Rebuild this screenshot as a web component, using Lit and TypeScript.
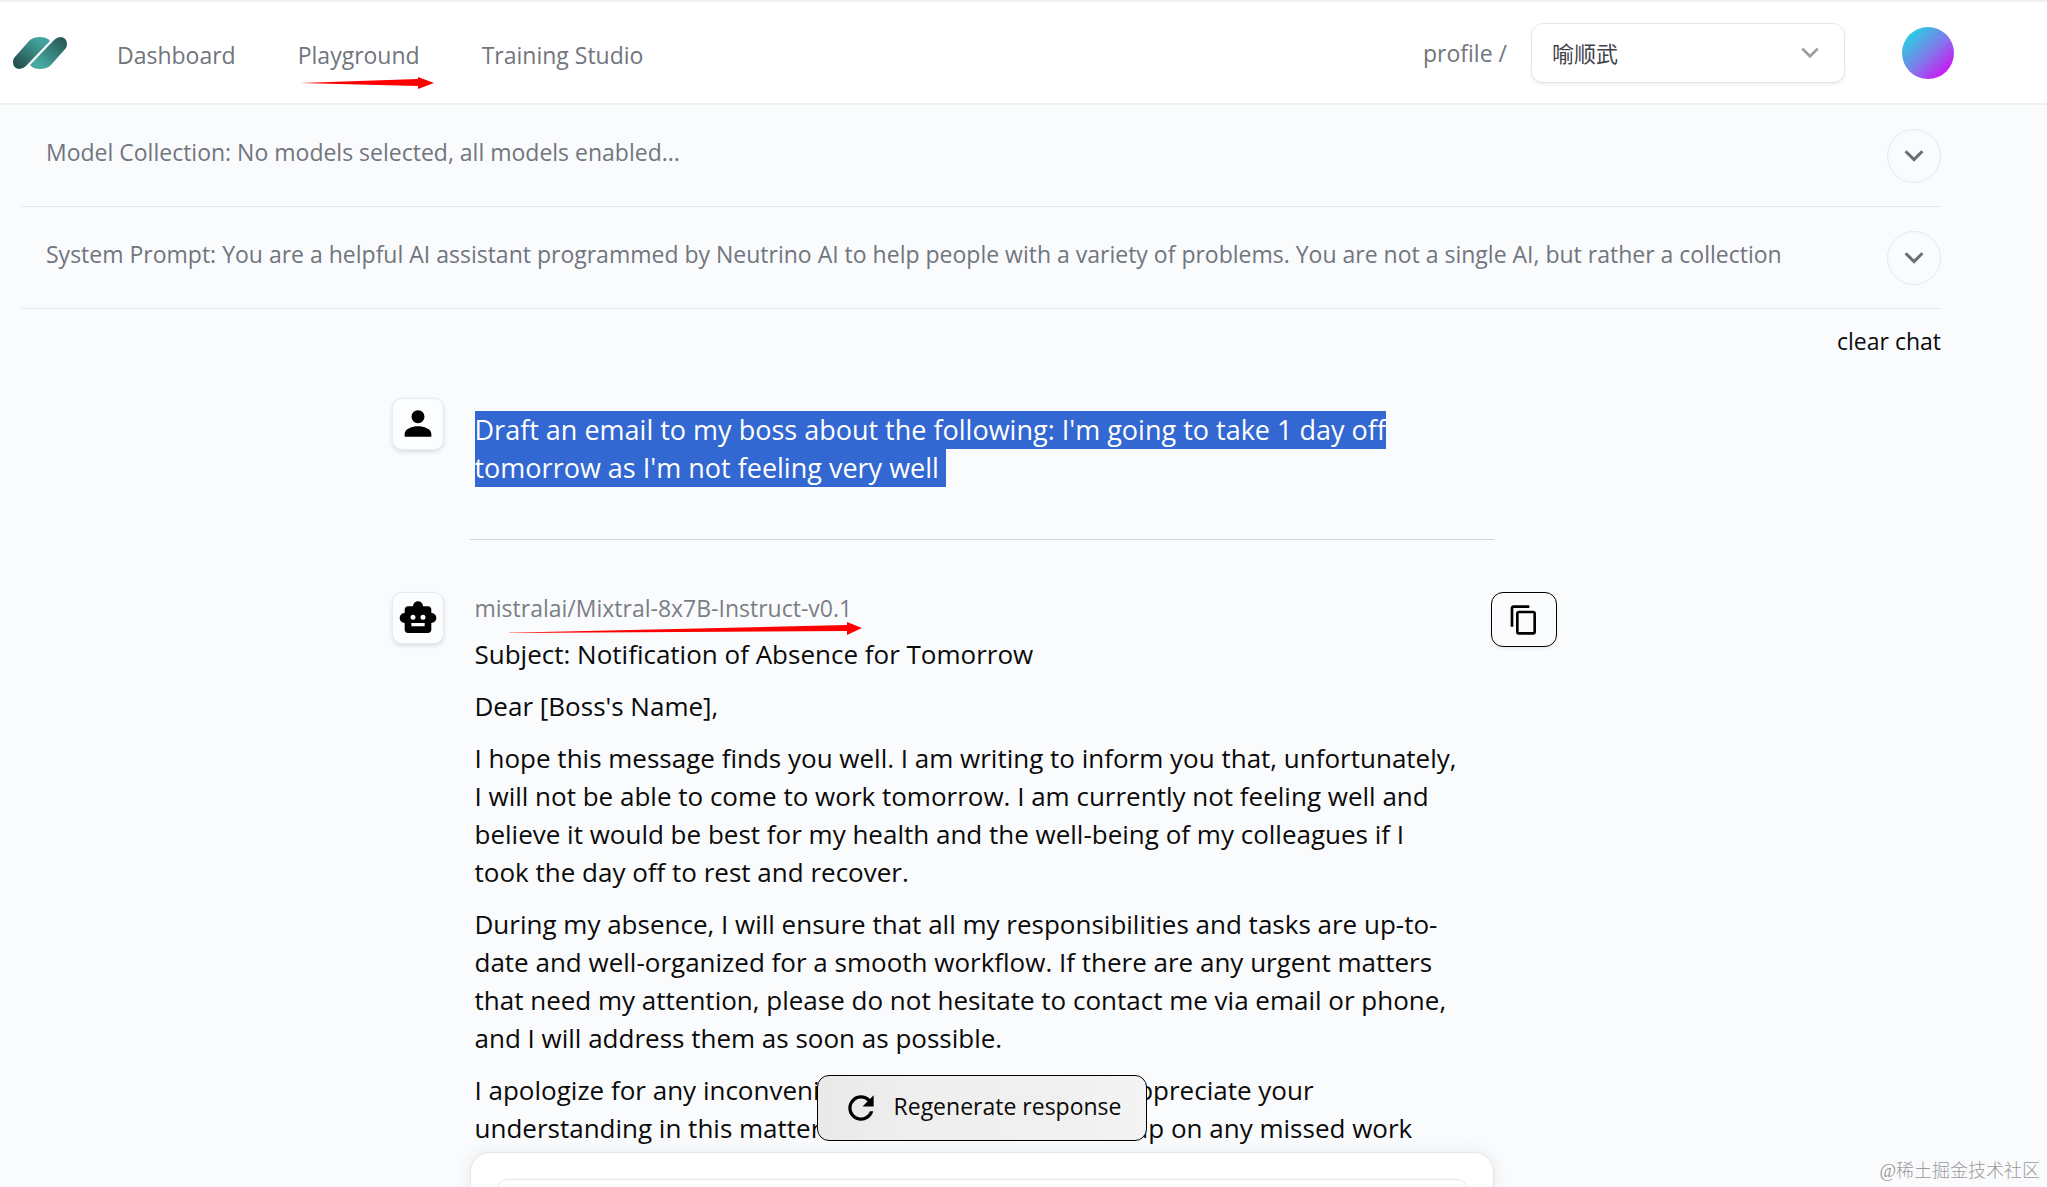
import { LitElement, html, css, svg } from "lit";
import { customElement } from "lit/decorators.js";

const chevron = svg`<path d="M3 6l7 7 7-7" fill="none" stroke="currentColor" stroke-width="2.500"/>`;

@customElement("top-bar")
export class TopBar extends LitElement {
  static styles = css`
    :host { display: block; }
    .bar {
      display: flex;
      align-items: center;
      box-sizing: border-box;
      height: 105px;
      padding: 0 93px 0 12px;
      background: #fff;
      border-top: 2px solid #eff0f1;
      border-bottom: 2px solid #eff1f1;
    }
    .logo { display: block; width: 56px; height: 34px; }
    .nav { display: flex; gap: 62px; margin-left: 49px; padding-top: 4px; flex: 1; }
    .link { position: relative; color: #71757d; text-decoration: none; line-height: 34px; white-space: nowrap; }
    .mark { position: absolute; left: 2px; top: 39px; width: 134px; height: 12px; }
    .profile { display: flex; align-items: center; gap: 24px; color: #71757d; }
    .picker { position: relative; color: #9a9da2; }
    .select {
      appearance: none;
      display: block;
      box-sizing: border-box;
      width: 314px;
      height: 60px;
      padding: 0 60px 0 20px;
      border: 1px solid #e4e6e9;
      border-radius: 12px;
      background: #fff;
      box-shadow: 0 2px 3px rgba(0, 0, 0, 0.06);
      color: #3f444c;
      font: 22px/34px "Open Sans", "Noto Sans CJK SC", sans-serif;
    }
    .arrow { position: absolute; right: 24px; top: 19px; width: 22px; height: 22px; pointer-events: none; }
    .avatar {
      width: 52px;
      height: 52px;
      margin-left: 57px;
      border: 0;
      border-radius: 50%;
      background: linear-gradient(135deg, #16e0e0 5%, #7a80ea 50%, #c81cf2 85%);
    }
  `;

  render() {
    return html`
      <header class="bar">
        <svg class="logo" viewBox="0 0 56 34" aria-hidden="true">
          <defs>
            <linearGradient id="l" x1="0" y1="1" x2="1" y2="0">
              <stop offset="0.1" stop-color="#24504f" /><stop offset="0.8" stop-color="#43a39c" />
            </linearGradient>
            <linearGradient id="r" x1="0" y1="1" x2="1" y2="0">
              <stop offset="0.2" stop-color="#46aaa2" /><stop offset="0.9" stop-color="#285a58" />
            </linearGradient>
          </defs>
          <path fill="url(#l)" d="M2 22L17 5Q21 1 28 1Q35 1 38 5L14 30Q11 33 7 33Q1 32 1 26Q1 24 2 22Z" />
          <path fill="url(#r)" d="M54 12L39 29Q35 33 28 33Q21 33 18 29L42 4Q45 1 49 1Q55 2 55 8Q55 10 54 12Z" />
        </svg>
        <nav class="nav">
          <a class="link" href="#dashboard">Dashboard</a>
          <a class="link" href="#playground">Playground
            <svg class="mark" viewBox="0 0 134 12" aria-hidden="true">
              <path fill="#fd0000" d="M0 6L118 2V0L134 6L118 12V9Z" />
            </svg>
          </a>
          <a class="link" href="#training">Training Studio</a>
        </nav>
        <div class="profile">
          <label for="profile">profile /</label>
          <div class="picker">
            <select class="select" id="profile"><option>喻顺武</option></select>
            <svg class="arrow" viewBox="0 0 20 20" aria-hidden="true">${chevron}</svg>
          </div>
        </div>
        <button class="avatar" aria-label="Account"></button>
      </header>
    `;
  }
}

@customElement("setting-row")
export class SettingRow extends LitElement {
  static properties = { text: {} };
  declare text: string;

  static styles = css`
    :host { display: block; }
    .row {
      display: flex;
      align-items: center;
      justify-content: space-between;
      box-sizing: border-box;
      height: 102px;
      padding-left: 24px;
      border-bottom: 1px solid #e4e6e9;
      color: #71757d;
    }
    .text { overflow: hidden; white-space: nowrap; padding-bottom: 8px; line-height: 34px; }
    .toggle {
      display: grid;
      place-items: center;
      flex: none;
      width: 54px;
      height: 54px;
      padding: 0;
      border: 1px solid #e6e8eb;
      border-radius: 50%;
      background: none;
      color: #696d74;
    }
    .icon { width: 24px; height: 24px; }
  `;

  render() {
    return html`
      <div class="row">
        <span class="text">${this.text}</span>
        <button class="toggle" aria-label="Expand">
          <svg class="icon" viewBox="0 0 20 20" aria-hidden="true">${chevron}</svg>
        </button>
      </div>
    `;
  }
}

const question = [
  "Draft an email to my boss about the following: I'm going to take 1 day off",
  "tomorrow as I'm not feeling very well ",
];

const answer = [
  ["Subject: Notification of Absence for Tomorrow"],
  ["Dear [Boss's Name],"],
  [
    "I hope this message finds you well. I am writing to inform you that, unfortunately,",
    "I will not be able to come to work tomorrow. I am currently not feeling well and",
    "believe it would be best for my health and the well-being of my colleagues if I",
    "took the day off to rest and recover.",
  ],
  [
    "During my absence, I will ensure that all my responsibilities and tasks are up-to-",
    "date and well-organized for a smooth workflow. If there are any urgent matters",
    "that need my attention, please do not hesitate to contact me via email or phone,",
    "and I will address them as soon as possible.",
  ],
  [
    "I apologize for any inconvenience this may cause and appreciate your",
    "understanding in this matter. I will make sure to catch up on any missed work",
  ],
];

@customElement("app-root")
export class AppRoot extends LitElement {
  static styles = css`
    :host {
      display: flex;
      flex-direction: column;
      position: relative;
      height: 100vh;
      overflow: hidden;
      background: #fafbfd;
      color: #0a0a0a;
      font: 23px/34px "Open Sans", "Noto Sans CJK SC", sans-serif;
    }
    .main {
      display: flex;
      flex-direction: column;
      flex: 1;
      min-height: 0;
      padding: 0 106px 0 22px;
    }
    .clear { align-self: flex-end; margin-top: 15px; padding: 0; border: 0; background: none; color: inherit; font: inherit; }
    .chat { flex: 1; min-height: 0; padding-top: 40px; overflow: hidden; }
    .message {
      display: grid;
      grid-template-columns: 77px minmax(0, 1024px) 64px;
      justify-content: center;
      align-items: start;
      padding-right: 15px;
    }
    .badge {
      display: grid;
      place-items: center;
      box-sizing: border-box;
      width: 52px;
      height: 52px;
      border: 1px solid #e8eaed;
      border-radius: 10px;
      background: #fcfdfe;
      box-shadow: 0 2px 4px rgba(0, 0, 0, 0.12);
    }
    .glyph { width: 40px; height: 40px; }
    .body { padding-left: 6px; font-size: 26px; line-height: 38px; white-space: nowrap; }
    .question { padding-top: 13px; font-size: 27px; }
    .picked { display: block; width: fit-content; white-space: pre; background: #3367d1; color: #fff; }
    .rule { width: 100%; max-width: 1024px; height: 1px; margin: 52px auto; border: 0; background: #d0d4d9; }
    .model { position: relative; width: fit-content; color: #7a7e85; font-size: 23px; line-height: 32px; }
    .mark { position: absolute; left: 24px; top: 30px; width: 363px; height: 13px; }
    .answer { display: flex; flex-direction: column; gap: 14px; padding-top: 11px; }
    .para { margin: 0; }
    .copy {
      display: grid;
      place-items: center;
      justify-self: end;
      width: 66px;
      height: 55px;
      padding: 0;
      border: 1px solid #000;
      border-radius: 12px;
      background: none;
      box-shadow: 0 2px 3px rgba(0, 0, 0, 0.06);
    }
    .copyicon { width: 32px; height: 32px; }
    .dock { flex: none; height: 35px; position: relative; align-self: center; width: 100%; max-width: 1024px; }
    .composer {
      box-sizing: border-box;
      padding: 26px;
      border: 1px solid #e4e6e9;
      border-radius: 20px;
      background: #fff;
      box-shadow: 0 0 16px rgba(0, 0, 0, 0.08);
    }
    .input {
      display: block;
      box-sizing: border-box;
      width: 100%;
      height: 64px;
      border: 1px solid #e4e6e9;
      border-radius: 10px;
      resize: none;
      font: inherit;
    }
    .regen {
      position: absolute;
      left: 50%;
      bottom: 46px;
      transform: translateX(-50%);
      display: flex;
      align-items: center;
      justify-content: center;
      gap: 14px;
      box-sizing: border-box;
      width: 330px;
      height: 66px;
      padding: 0 6px;
      border: 1px solid #000;
      border-radius: 12px;
      background: linear-gradient(90deg, #e9e9e9, #efefef 30%, #f0f0f0 75%, #f4f4f4);
      color: #0a0a0a;
      font: inherit;
      white-space: nowrap;
    }
    .redo { width: 38px; height: 38px; }
    .label { padding-bottom: 4px; }
    .watermark {
      position: absolute;
      right: 7px;
      bottom: 3px;
      color: #9a9a9a;
      font: 300 18px/26px "Liberation Serif", "Noto Sans CJK SC", serif;
    }
  `;

  render() {
    return html`
      <top-bar></top-bar>
      <main class="main">
        <setting-row text="Model Collection: No models selected, all models enabled..."></setting-row>
        <setting-row
          text="System Prompt: You are a helpful AI assistant programmed by Neutrino AI to help people with a variety of problems. You are not a single AI, but rather a collection"
        ></setting-row>
        <button class="clear">clear chat</button>
        <section class="chat">
          <article class="message">
            <div class="badge">
              <svg class="glyph" viewBox="0 0 24 24" aria-hidden="true">
                <circle cx="12" cy="7.6" r="3.9" />
                <path d="M4 19.6v-1.7c0-3 4.6-4.6 8-4.6s8 1.600 8 4.600v1.700z" />
              </svg>
            </div>
            <div class="body question">${question.map((t) => html`<span class="picked">${t}</span>`)}</div>
          </article>
          <hr class="rule" />
          <article class="message">
            <div class="badge">
              <svg class="glyph" viewBox="0 0 24 24" aria-hidden="true">
                <path fill-rule="evenodd" d="M20 9V7c0-1.100-.9-2-2-2h-3a3 3 0 0 0-6 0H6c-1.100 0-2 .9-2 2v2a3 3 0 0 0 0 6v4c0 1.100.9 2 2 2h12c1.100 0 2-.9 2-2v-4a3 3 0 0 0 0-6zM7.500 11.500a1.500 1.500 0 1 1 3 0a1.500 1.500 0 0 1-3 0zM16 17H8v-2h8zM15 13a1.500 1.500 0 1 1 0-3a1.500 1.500 0 0 1 0 3z" />
              </svg>
            </div>
            <div class="body">
              <div class="model">
                mistralai/Mixtral-8x7B-Instruct-v0.1
                <svg class="mark" viewBox="0 0 363 13" aria-hidden="true">
                  <path fill="#fd0000" d="M0 11L348 3V0L363 6L348 13V9Z" />
                </svg>
              </div>
              <div class="answer">
                ${answer.map((p) => html`<p class="para">${p.map((t, i) => html`${i ? html`<br />` : ""}${t}`)}</p>`)}
              </div>
            </div>
            <button class="copy" aria-label="Copy">
              <svg class="copyicon" viewBox="0 0 24 24" aria-hidden="true">
                <path d="M16 1H4c-1.100 0-2 .9-2 2v14h2V3h12V1zm3 4H8c-1.100 0-2 .9-2 2v14c0 1.100.9 2 2 2h11c1.100 0 2-.9 2-2V7c0-1.100-.9-2-2-2zm0 16H8V7h11v14z" />
              </svg>
            </button>
          </article>
        </section>
        <footer class="dock">
          <form class="composer"><textarea class="input" aria-label="Message"></textarea></form>
          <button class="regen">
            <svg class="redo" viewBox="0 0 24 24" aria-hidden="true">
              <path d="M17.650 6.350A7.958 7.958 0 0 0 12 4a8 8 0 1 0 7.730 10h-2.080A6 6 0 1 1 12 6c1.660 0 3.140.69 4.220 1.780L13 11h7V4l-2.350 2.350z" />
            </svg>
            <span class="label">Regenerate response</span>
          </button>
        </footer>
      </main>
      <span class="watermark">@稀土掘金技术社区</span>
    `;
  }
}
